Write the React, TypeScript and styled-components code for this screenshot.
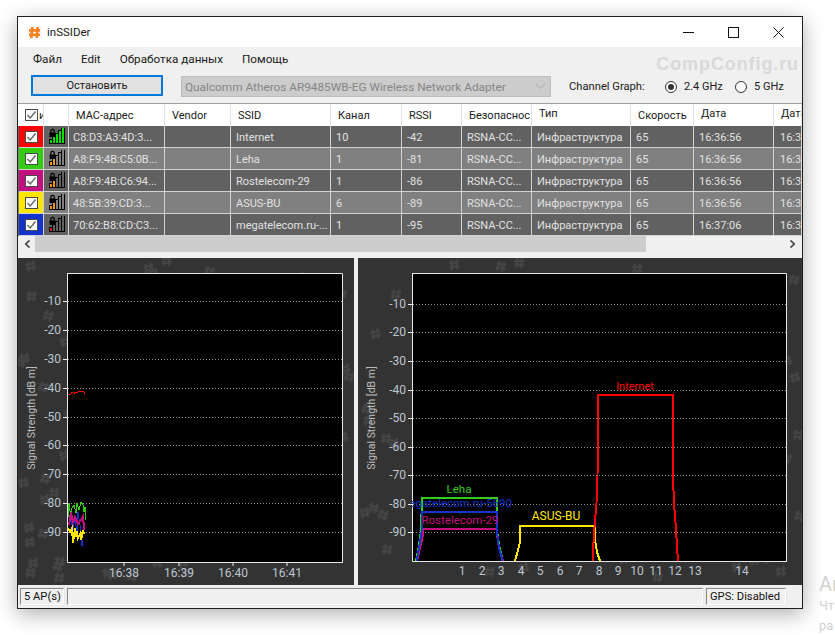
import React from 'react';
import styled, { createGlobalStyle } from 'styled-components';

const GlobalStyle = createGlobalStyle`
    html, body {
        margin: 0;
        padding: 0;
        background: #ffffff;
        overflow: hidden;
    }
    body {
        font-family: Roboto, "Liberation Sans", sans-serif;
        font-size: 11px;
        color: #1a1a1a;
    }
`;

const Page = styled.div`
    position: relative;
    width: 835px;
    height: 635px;
    overflow: hidden;
    padding: 16px 0 0 17px;
    box-sizing: border-box;
`;

const Window = styled.div`
    position: relative;
    width: 786px;
    height: 593px;
    box-sizing: border-box;
    border: 1px solid #1f1f1f;
    background: #f0f0f0;
    box-shadow: 0 5px 20px rgba(0, 0, 0, 0.32);
    display: flex;
    flex-direction: column;
`;

const TitleBar = styled.div`
    height: 30px;
    background: #ffffff;
    display: flex;
    align-items: center;
    padding: 0 1px 0 9px;
    font-size: 11.5px;
`;

const TitleText = styled.span`
    flex: 1;
    margin-left: 5px;
`;

const WinButton = styled.div`
    width: 45px;
    height: 30px;
    display: flex;
    align-items: center;
    justify-content: center;
`;

const MenuBar = styled.div`
    height: 23px;
    display: flex;
    align-items: center;
    padding-left: 15px;
    gap: 19px;
    font-size: 11.7px;
`;

const Toolbar = styled.div`
    height: 33px;
    display: flex;
    align-items: center;
    padding-left: 13px;
    box-sizing: border-box;
    & > * {
        flex-shrink: 0;
    }
`;

const StopButton = styled.div`
    width: 132px;
    height: 21px;
    margin-top: -2px;
    box-sizing: border-box;
    border: 2px solid #0078d7;
    background: #e1e1e1;
    display: flex;
    align-items: center;
    justify-content: center;
`;

const AdapterSelect = styled.div`
    width: 370px;
    height: 21px;
    margin-left: 18px;
    box-sizing: border-box;
    border: 1px solid #bdbdbd;
    background: #cccccc;
    color: #868686;
    font-size: 11.8px;
    display: flex;
    align-items: center;
    justify-content: space-between;
    padding: 0 4px 0 3px;
    white-space: nowrap;
`;

const ChannelLabel = styled.span`
    margin-left: 18px;
    width: 96px;
    font-size: 11.2px;
    white-space: nowrap;
`;

const RadioItem = styled.div`
    display: flex;
    align-items: center;
    gap: 7px;
    width: 70px;
    white-space: nowrap;
`;

const RadioCircle = styled.span<{ $checked?: boolean }>`
    width: 12px;
    height: 12px;
    box-sizing: border-box;
    border: 1px solid #333333;
    border-radius: 50%;
    background: #ffffff;
    display: flex;
    align-items: center;
    justify-content: center;
    &::after {
        content: '';
        width: 6px;
        height: 6px;
        border-radius: 50%;
        background: ${(p) => (p.$checked ? '#333333' : 'transparent')};
    }
`;

const Watermark = styled.div`
    position: absolute;
    top: 37px;
    right: 3px;
    font-family: "Liberation Sans", sans-serif;
    font-weight: bold;
    font-size: 18px;
    letter-spacing: 0.9px;
    color: #d9d9d9;
`;

const COLUMNS = '26px 25px 96px 66px 100px 71px 60px 70px 99px 63px 80px 28px';

const Table = styled.div`
    border-top: 1px solid #a0a0a0;
    overflow: hidden;
`;

const HeaderRow = styled.div`
    display: grid;
    grid-template-columns: ${COLUMNS};
    height: 22px;
    background: #ffffff;
`;

const HeaderCell = styled.div<{ $raised?: boolean }>`
    box-sizing: border-box;
    border-right: 1px solid #e3e3e3;
    padding-left: 7px;
    line-height: ${(p) => (p.$raised ? '20px' : '23px')};
    white-space: nowrap;
    overflow: hidden;
`;

const HeaderCheckCell = styled(HeaderCell)`
    padding: 0 0 0 7px;
    display: flex;
    align-items: center;
    gap: 1px;
`;

const Row = styled.div<{ $alt: boolean }>`
    display: grid;
    grid-template-columns: ${COLUMNS};
    height: 22px;
    background: ${(p) => (p.$alt ? '#808080' : '#616161')};
    color: #e2e2e2;
`;

const Cell = styled.div<{ $pad?: number }>`
    box-sizing: border-box;
    border-right: 1px solid #d2d2d2;
    border-bottom: 1px solid #d2d2d2;
    padding-left: ${(p) => p.$pad ?? 5}px;
    line-height: 23px;
    white-space: nowrap;
    overflow: hidden;
`;

const ColorCell = styled.div<{ $color: string }>`
    box-sizing: border-box;
    margin-left: 1px;
    border-right: 1px solid #d2d2d2;
    border-bottom: 1px solid #d2d2d2;
    background: ${(p) => p.$color};
    display: flex;
    align-items: center;
    justify-content: center;
`;

const IconCell = styled(Cell)`
    padding: 2px 0 0 5px;
`;

const CheckBox = styled.span`
    width: 13px;
    height: 12px;
    box-sizing: border-box;
    border: 1px solid #4a4a4a;
    background: #ffffff;
    display: flex;
    align-items: center;
    justify-content: center;
    flex-shrink: 0;
`;

const ScrollBar = styled.div`
    height: 16px;
    display: flex;
    align-items: center;
    justify-content: space-between;
    padding: 0 2px;
`;

const ScrollArrow = styled.div`
    width: 15px;
    height: 16px;
    display: flex;
    align-items: center;
    justify-content: center;
`;

const ScrollTrack = styled.div`
    flex: 1;
    height: 16px;
`;

const ScrollThumb = styled.div`
    width: 611px;
    height: 16px;
    background: #cdcdcd;
`;

const Charts = styled.div`
    margin-top: 6px;
    height: 327px;
    display: flex;
    justify-content: space-between;
    background: #f0f0f0;
`;

const ChartPanel = styled.div<{ $width: number }>`
    width: ${(p) => p.$width}px;
    height: 327px;
    background: #333333;
    svg {
        display: block;
    }
`;

const ChartText = styled.text<{ $size?: number }>`
    font-family: Roboto, "Liberation Sans", sans-serif;
    font-size: ${(p) => p.$size ?? 12}px;
`;

const StatusBar = styled.div`
    height: 23px;
    display: flex;
    align-items: center;
    padding: 0 16px 0 2px;
    gap: 3px;
    box-sizing: border-box;
`;

const StatusPanel = styled.div<{ $grow?: boolean; $width?: number }>`
    height: 17px;
    box-sizing: border-box;
    border: 1px solid;
    border-color: #8a8a8a #ffffff #ffffff #8a8a8a;
    box-shadow: 0 0 0 0.5px #dcdcdc;
    line-height: 15px;
    padding-left: 3px;
    flex: ${(p) => (p.$grow ? 1 : 'none')};
    width: ${(p) => (p.$width ? `${p.$width}px` : 'auto')};
    white-space: nowrap;
    color: #111111;
    font-size: 11.2px;
`;

const BehindText = styled.div`
    position: absolute;
    left: 819px;
    color: #d2d2d2;
    white-space: nowrap;
`;

const BehindTitle = styled(BehindText)`
    top: 572px;
    font-size: 20px;
`;

const BehindLineOne = styled(BehindText)`
    top: 598px;
    font-size: 13px;
`;

const BehindLineTwo = styled(BehindText)`
    top: 618px;
    font-size: 13px;
`;

const Logo = () => (
    <svg width="15" height="15" viewBox="0 0 15 15">
        <rect x="0" y="0" width="15" height="15" rx="2" fill="#f6f6f6" />
        <path d="M5.3 2 L4.3 13 M10.7 2 L9.7 13 M2 5.4 H13 M2 9.8 H13" stroke="#f58220" strokeWidth="2.6" fill="none" />
    </svg>
);

const CheckMark = () => (
    <svg width="11" height="10" viewBox="0 0 11 10">
        <path d="M1.5 5 L4.2 8 L9.5 1.5" stroke="#666666" strokeWidth="1.4" fill="none" />
    </svg>
);

const Arrow = ({ dir }: { dir: 'left' | 'right' }) => (
    <svg width="7" height="8" viewBox="0 0 7 8">
        <path d={dir === 'left' ? 'M5.5 0.5 L1.8 4 L5.5 7.5' : 'M1.5 0.5 L5.2 4 L1.5 7.5'} stroke="#444444" strokeWidth="1.7" fill="none" />
    </svg>
);

const SignalIcon = ({ level, color }: { level: number; color: string }) => {
    const bars = [0, 1, 2, 3, 4];
    return (
        <svg width="17" height="17" viewBox="0 0 17 17">
            {bars.map((i) => {
                const h = 4 + i * 3;
                return (
                    <rect
                        key={i}
                        x={0.5 + i * 3}
                        y={15.5 - h}
                        width={3}
                        height={h}
                        fill={i < level ? color : 'transparent'}
                        stroke="#000000"
                        strokeWidth="1"
                        shapeRendering="crispEdges"
                    />
                );
            })}
            <rect x="0.5" y="4.5" width="6" height="4.5" fill="#000000" />
            <path d="M1.8 5 V3 a1.7 1.7 0 0 1 3.4 0 V5" stroke="#000000" strokeWidth="1.2" fill="none" />
        </svg>
    );
};

const networks = [
    { color: '#ff0000', mac: 'C8:D3:A3:4D:3...', ssid: 'Internet', channel: '10', rssi: '-42', date: '16:36:56', level: 5, bar: '#00e000' },
    { color: '#33cc11', mac: 'A8:F9:4B:C5:0B...', ssid: 'Leha', channel: '1', rssi: '-81', date: '16:36:56', level: 2, bar: '#ff9900' },
    { color: '#c4107f', mac: 'A8:F9:4B:C6:94...', ssid: 'Rostelecom-29', channel: '1', rssi: '-86', date: '16:36:56', level: 2, bar: '#ff9900' },
    { color: '#ffe600', mac: '48:5B:39:CD:3...', ssid: 'ASUS-BU', channel: '6', rssi: '-89', date: '16:36:56', level: 2, bar: '#ff9900' },
    { color: '#1432cc', mac: '70:62:B8:CD:C3...', ssid: 'megatelecom.ru-...', channel: '1', rssi: '-95', date: '16:37:06', level: 1, bar: '#ff1a1a' },
];

const headers = [
    { label: 'MAC-адрес' },
    { label: 'Vendor' },
    { label: 'SSID' },
    { label: 'Канал' },
    { label: 'RSSI' },
    { label: 'Безопаснос' },
    { label: 'Тип', raised: true },
    { label: 'Скорость' },
    { label: 'Дата', raised: true },
    { label: 'Дата', raised: true },
];

// faint # marks scattered on the chart background
const hashMarks = (x0: number, w: number, seed: number) => {
    const marks = [];
    let s = seed;
    for (let i = 0; i < 110; i++) {
        s = (s * 9301 + 49297) % 233280;
        const x = x0 + (s / 233280) * w;
        s = (s * 9301 + 49297) % 233280;
        const y = 260 + (s / 233280) * 322;
        marks.push({ x, y, r: ((i * 37) % 40) - 20 });
    }
    return marks;
};

const HashMarks = ({ x0, w, seed }: { x0: number; w: number; seed: number }) => (
    <g stroke="#444444" strokeWidth="2.4" fill="none">
        {hashMarks(x0, w, seed).map((m, i) => (
            <path
                key={i}
                d="M-2 -5 L-3 5 M3 -5 L2 5 M-5 -2 H5 M-5 2 H5"
                transform={`translate(${m.x} ${m.y}) rotate(${m.r})`}
            />
        ))}
    </g>
);

const DBS = [-10, -20, -30, -40, -50, -60, -70, -80, -90];

const Axis = ({ left, right, bottom, labelX, ys, labelY }: { left: number; right: number; bottom: number; labelX: number; ys: number[]; labelY: number }) => (
    <>
        <rect x={left} y={273} width={right - left} height={bottom - 273} fill="#000000" />
        <path d={`M${left + 0.5} 273 V${bottom + 0.5} H${right}`} stroke="#e6e6e6" fill="none" />
        <path d={`M${left} 273.5 H${right - 0.5} V${bottom}`} stroke="#e6e6e6" fill="none" />
        {ys.map((y, i) => (
            <g key={i}>
                <line x1={left + 1} x2={right - 1} y1={y + 0.5} y2={y + 0.5} stroke="#8c8c8c" strokeDasharray="1 2" />
                <line x1={left - 4} x2={left} y1={y + 0.5} y2={y + 0.5} stroke="#f0f0f0" />
                <ChartText x={left - 6} y={y + 4} fill="#bcc6d0" textAnchor="end">
                    {DBS[i]}
                </ChartText>
            </g>
        ))}
        <ChartText
            $size={10.5}
            x={labelX}
            y={labelY}
            fill="#bdbdbd"
            textAnchor="middle"
            transform={`rotate(-90 ${labelX} ${labelY})`}
        >
            Signal Strength [dB m]
        </ChartText>
    </>
);

const TIME_TICKS = [
    { x: 124, t: '16:38' },
    { x: 179, t: '16:39' },
    { x: 233, t: '16:40' },
    { x: 287, t: '16:41' },
];

const TimeChart = () => (
    <svg width="336" height="327" viewBox="18 258 336 327">
        <HashMarks x0={20} w={330} seed={17} />
        <Axis left={67} right={343} bottom={562} labelX={35} labelY={418} ys={[301, 330, 359, 388, 417, 445, 474, 503, 532]} />
        {TIME_TICKS.map((k) => (
            <g key={k.t}>
                <line x1={k.x} x2={k.x} y1={562} y2={566} stroke="#f0f0f0" />
                <ChartText x={k.x} y={577} fill="#bcc6d0" textAnchor="middle">
                    {k.t}
                </ChartText>
            </g>
        ))}
        <g fill="none" strokeWidth="1" shapeRendering="crispEdges">
            <polyline stroke="#ff0000" points="68,394 71,394 72,392 74,394 75,392 77,393 79,391 81,392 82,391 84,392 85,394" />
            <polyline stroke="#1432cc" points="71,520 73,530 75,517 77,535 78,512 80,525 81,534 82,546 83,540" />
            <polyline stroke="#33cc11" points="68,517 69,503 71,518 72,508 74,505 76,513 77,503 79,510 81,502 83,505 84,512 85,507 85,520" />
            <polyline stroke="#c4107f" strokeWidth="2" points="69,525 71,512 73,522 75,517 78,524 81,520 83,516 84,530 84,522" />
            <polyline stroke="#ffe600" strokeWidth="2" points="68,528 70,532 72,528 73,543 75,528 76,537 77,531 78,538 80,534 81,540 83,530 84,534" />
        </g>
    </svg>
);

const CHANNELS = [
    { x: 462, t: '1' },
    { x: 482, t: '2' },
    { x: 501, t: '3' },
    { x: 521, t: '4' },
    { x: 540, t: '5' },
    { x: 560, t: '6' },
    { x: 579, t: '7' },
    { x: 599, t: '8' },
    { x: 618, t: '9' },
    { x: 637, t: '10' },
    { x: 656, t: '11' },
    { x: 675, t: '12' },
    { x: 695, t: '13' },
    { x: 742, t: '14' },
];

const ChannelChart = () => (
    <svg width="444" height="327" viewBox="358 258 444 327">
        <defs>
            <clipPath id="plot">
                <rect x="412" y="274" width="375" height="287" />
            </clipPath>
        </defs>
        <HashMarks x0={360} w={440} seed={91} />
        <Axis left={412} right={787} bottom={561} labelX={375} labelY={418} ys={[304, 332, 361, 390, 418, 447, 475, 504, 532]} />
        {CHANNELS.map((c) => (
            <ChartText key={c.t} x={c.x} y={575} fill="#bcc6d0" textAnchor="middle">
                {c.t}
            </ChartText>
        ))}
        <g clipPath="url(#plot)" fill="none" strokeWidth="2">
            <g shapeRendering="crispEdges">
                <polyline stroke="#33cc11" points="416,561 419,545 421,530 422,498 497,498 497,530 499,545 503,561" />
                <polyline stroke="#c4107f" points="417,561 420,548 423,535 423,529 497,529 497,535 499,548 503,561" />
                <polyline stroke="#1432cc" points="416.5,561 419,548 421.5,532 422,512 497,512 497,532 499,548 502.5,561" />
                <polyline stroke="#ffe600" points="515,561 518,550 520.5,540 520,526 595,526 595,540 597,552 600,561" />
                <polyline stroke="#ff0000" points="592.5,561 594,533 596.5,503 597.5,478 598,395 673,395 673,478 674,503 676,530 678,561" />
            </g>
            <g stroke="none">
                <ChartText $size={11.5} x={459} y={493} fill="#33cc11" textAnchor="middle">Leha</ChartText>
                <ChartText $size={11.5} x={512} y={507} fill="#1432cc" textAnchor="end">megatelecom.ru-5690</ChartText>
                <ChartText $size={11.5} x={460} y={524} fill="#c4107f" textAnchor="middle">Rostelecom-29</ChartText>
                <ChartText x={556} y={520} fill="#ffe600" textAnchor="middle">ASUS-BU</ChartText>
                <ChartText $size={11} x={635} y={390} fill="#ff0000" textAnchor="middle">Internet</ChartText>
            </g>
        </g>
    </svg>
);

const App = () => {
    return (
        <Page>
            <GlobalStyle />
            <Window>
                <TitleBar>
                    <Logo />
                    <TitleText>inSSIDer</TitleText>
                    <WinButton>
                        <svg width="11" height="11" viewBox="0 0 11 11">
                            <line x1="0" x2="11" y1="5.5" y2="5.5" stroke="#111" />
                        </svg>
                    </WinButton>
                    <WinButton>
                        <svg width="11" height="11" viewBox="0 0 11 11">
                            <rect x="0.5" y="0.5" width="10" height="10" fill="none" stroke="#111" />
                        </svg>
                    </WinButton>
                    <WinButton>
                        <svg width="11" height="11" viewBox="0 0 11 11">
                            <path d="M0.5 0.5 L10.5 10.5 M10.5 0.5 L0.5 10.5" stroke="#111" fill="none" />
                        </svg>
                    </WinButton>
                </TitleBar>
                <MenuBar>
                    <span>Файл</span>
                    <span>Edit</span>
                    <span>Обработка данных</span>
                    <span>Помощь</span>
                </MenuBar>
                <Watermark>CompConfig.ru</Watermark>
                <Toolbar>
                    <StopButton>Остановить</StopButton>
                    <AdapterSelect>
                        <span>Qualcomm Atheros AR9485WB-EG Wireless Network Adapter</span>
                        <svg width="11" height="7" viewBox="0 0 11 7">
                            <path d="M1 1 L5.5 5.5 L10 1" stroke="#a8a8a8" fill="none" />
                        </svg>
                    </AdapterSelect>
                    <ChannelLabel>Channel Graph:</ChannelLabel>
                    <RadioItem>
                        <RadioCircle $checked />
                        <span>2.4 GHz</span>
                    </RadioItem>
                    <RadioItem>
                        <RadioCircle />
                        <span>5 GHz</span>
                    </RadioItem>
                </Toolbar>
                <Table>
                    <HeaderRow>
                        <HeaderCheckCell>
                            <CheckBox>
                                <CheckMark />
                            </CheckBox>
                            <span>и</span>
                        </HeaderCheckCell>
                        <HeaderCell />
                        {headers.map((h, i) => (
                            <HeaderCell key={i} $raised={h.raised}>
                                {h.label}
                            </HeaderCell>
                        ))}
                    </HeaderRow>
                    {networks.map((n, i) => (
                        <Row key={n.mac} $alt={i % 2 === 1}>
                            <ColorCell $color={n.color}>
                                <CheckBox>
                                    <CheckMark />
                                </CheckBox>
                            </ColorCell>
                            <IconCell>
                                <SignalIcon level={n.level} color={n.bar} />
                            </IconCell>
                            <Cell $pad={4}>{n.mac}</Cell>
                            <Cell />
                            <Cell>{n.ssid}</Cell>
                            <Cell>{n.channel}</Cell>
                            <Cell>{n.rssi}</Cell>
                            <Cell>RSNA-CC...</Cell>
                            <Cell>Инфраструктура</Cell>
                            <Cell>65</Cell>
                            <Cell>{n.date}</Cell>
                            <Cell $pad={6}>16:37:06</Cell>
                        </Row>
                    ))}
                </Table>
                <ScrollBar>
                    <ScrollArrow>
                        <Arrow dir="left" />
                    </ScrollArrow>
                    <ScrollTrack>
                        <ScrollThumb />
                    </ScrollTrack>
                    <ScrollArrow>
                        <Arrow dir="right" />
                    </ScrollArrow>
                </ScrollBar>
                <Charts>
                    <ChartPanel $width={336}>
                        <TimeChart />
                    </ChartPanel>
                    <ChartPanel $width={444}>
                        <ChannelChart />
                    </ChartPanel>
                </Charts>
                <StatusBar>
                    <StatusPanel $width={44}>5 AP(s)</StatusPanel>
                    <StatusPanel $grow />
                    <StatusPanel $width={80}>GPS: Disabled</StatusPanel>
                </StatusBar>
            </Window>
            <BehindTitle>Ar</BehindTitle>
            <BehindLineOne>Чт</BehindLineOne>
            <BehindLineTwo>ра</BehindLineTwo>
        </Page>
    );
};

export default App;
